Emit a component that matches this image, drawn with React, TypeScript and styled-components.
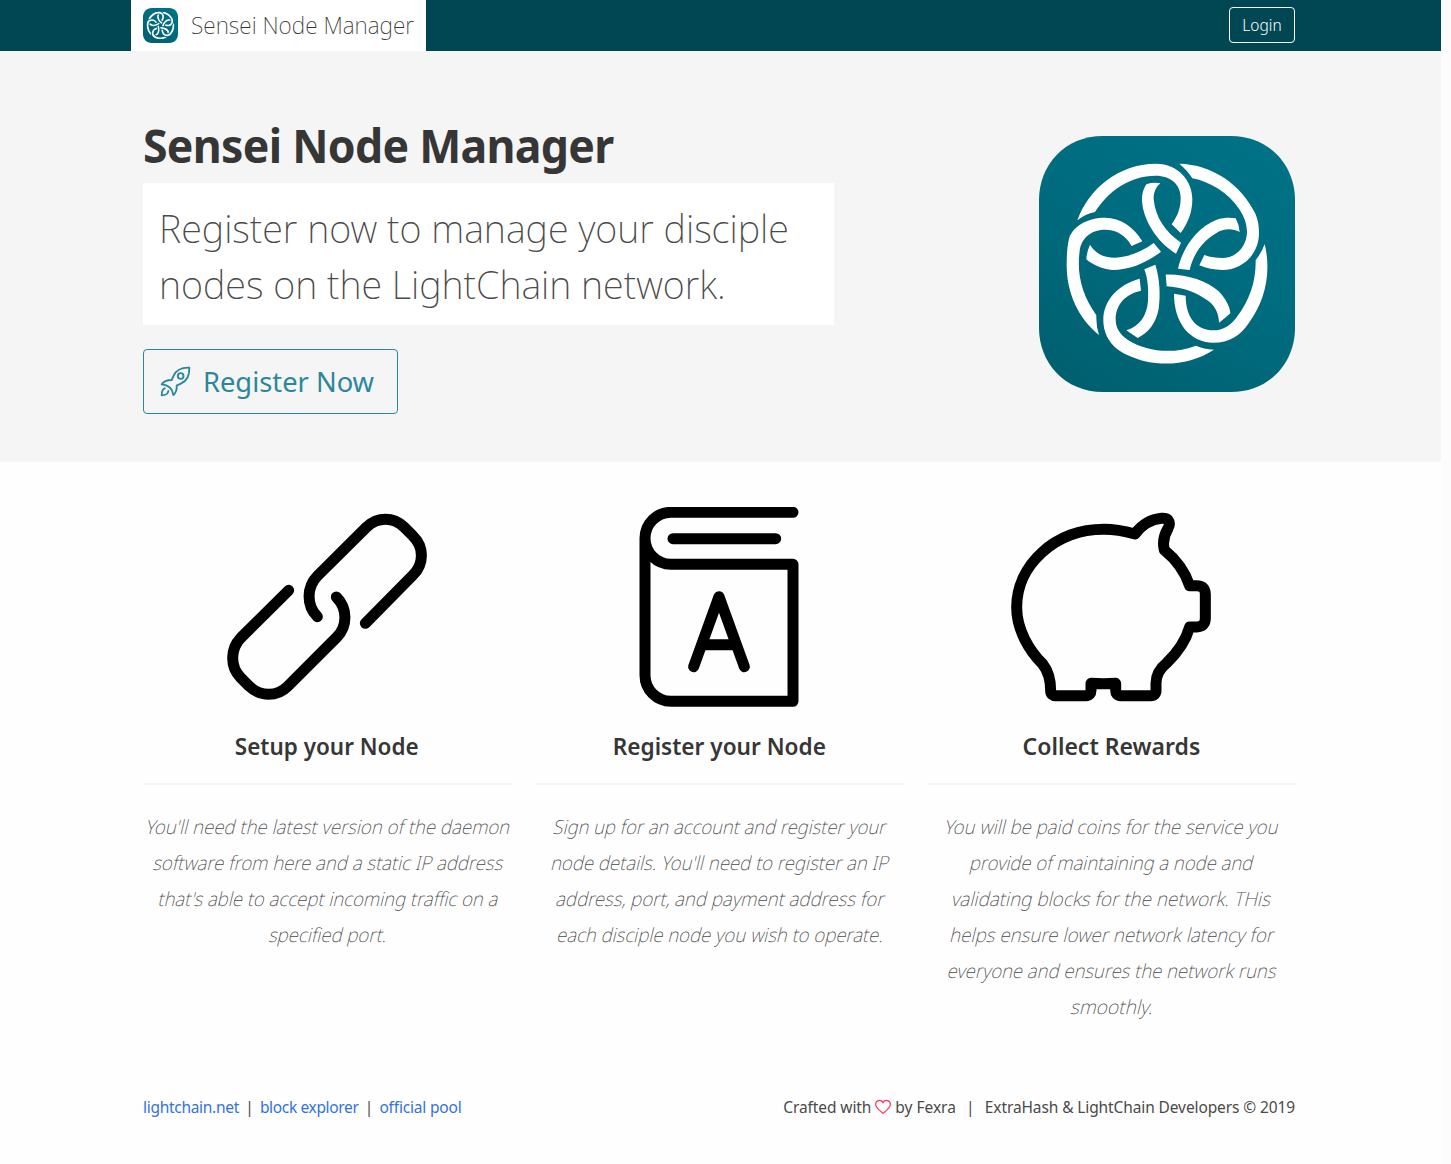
import React from "react";
import styled, { createGlobalStyle } from "styled-components";

const GlobalStyle = createGlobalStyle`
  *, *::before, *::after { box-sizing: border-box; }
  html { background: #fcfcfc; }
  body {
    margin: 0;
    font-family: "Noto Sans", "Open Sans", sans-serif;
    font-size: 16px;
    line-height: 24px;
    color: #4a4a4a;
  }
  h1, h2, h3, p { margin: 0; }
`;

const Page = styled.div`
  width: 1441px;
  height: 1164px;
  overflow: hidden;
  background: #fefefe;
`;

const Container = styled.div`
  width: 1152px;
  margin-left: 143px;
  display: flex;
  justify-content: space-between;
`;

const NavBar = styled.nav`
  height: 51px;
  background: #004753;
`;

const NavRow = styled(Container)`
  height: 51px;
  align-items: center;
`;

const Brand = styled.a`
  display: flex;
  align-items: center;
  gap: 13px;
  width: 295px;
  height: 51px;
  margin-left: -12px;
  padding: 0 12px;
  background: #fff;
`;

const Tracked = styled.span<{ $track: number }>`
  display: block;
  white-space: nowrap;
  letter-spacing: ${(p) => p.$track}px;
`;

/* Narrows a line of text; the origin is the side it is aligned to. */
const Narrow = styled.span<{ $scale: number; $origin?: string; $track?: number }>`
  display: block;
  white-space: nowrap;
  letter-spacing: ${(p) => p.$track ?? 0}px;
  transform: scaleX(${(p) => p.$scale});
  transform-origin: ${(p) => p.$origin ?? "0"} 50%;
`;

const BrandName = styled.span`
  width: 223px;
  margin-bottom: 1px;
  font-size: 23.4px;
  font-weight: 200;
  color: #363636;
`;

const LoginButton = styled.button`
  width: 66px;
  height: 36px;
  margin-bottom: 1px;
  padding: 0;
  border: 1px solid #fff;
  border-radius: 4px;
  background: transparent;
  color: #fff;
  font: 350 15.5px/24px "Noto Sans", sans-serif;
`;

const Hero = styled.section`
  height: 411px;
  background: #f5f5f5;
`;

const HeroCopy = styled.div`
  width: 691px;
  padding-top: 67px;
`;

const HeroTitle = styled.h1`
  height: 65px;
  font-size: 46px;
  line-height: 54px;
  font-weight: 700;
  color: #363636;
`;

const HeroSubtitle = styled.h2`
  height: 142px;
  padding: 17px 16px;
  background: #fff;
  font-size: 38.5px;
  line-height: 56px;
  font-weight: 200;
  color: #4a4a4a;
`;

const RegisterButton = styled.button`
  display: flex;
  align-items: center;
  gap: 12px;
  width: 255px;
  height: 65px;
  margin-top: 24px;
  padding: 0 0 0 16px;
  border: 1px solid #2d879c;
  border-radius: 4px;
  background: transparent;
  color: #2d879c;
  font: 400 27.3px/42px "Noto Sans", sans-serif;
`;

const LogoHolder = styled.div`
  padding-top: 85px;
`;

const LogoSvg = styled.svg`
  display: block;
  flex: none;
`;

const Columns = styled(Container)`
  height: 616px;
  padding-top: 45px;
`;

const Column = styled.article`
  display: flex;
  flex-direction: column;
  align-items: center;
  width: 368px;
`;

const ColumnTitle = styled.h3`
  margin-top: 21px;
  font-size: 23.4px;
  line-height: 36px;
  font-weight: 600;
  color: #363636;
`;

const Rule = styled.div`
  width: 368px;
  height: 2px;
  margin: 19px -1px 24px 1px;
  background: #f4f4f4;
`;

const Description = styled.p`
  display: flex;
  flex-direction: column;
  align-items: center;
  padding-left: 2px;
  font-size: 19.4px;
  line-height: 36px;
  font-weight: 200;
  color: #4a4a4a;
`;

/* The light cut is slanted rather than swapped for its cursive italic. */
const SlantedLine = styled.span<{ $scale: number }>`
  display: block;
  white-space: nowrap;
  transform: scaleX(${(p) => p.$scale * 1.031}) skewX(-14deg);
  transform-origin: 50% 20px;
`;

const Footer = styled(Container)`
  padding-top: 17px;
  font-size: 15.5px;
`;

const FooterGroup = styled.div`
  display: flex;
  align-items: center;
`;

const FooterLink = styled.a`
  color: #3273dc;
`;

const Pipe = styled.span<{ $gap: number }>`
  margin: 0 ${(p) => p.$gap}px;
`;

const HeartIcon = styled.svg`
  margin: 0 4px;
`;

function Logo({ size }: { size: number }) {
  return (
    <LogoSvg width={size} height={size} viewBox="27 30 768 768">
      <defs>
        <linearGradient id="teal" x1="0.8" y1="0" x2="0.2" y2="1">
          <stop offset="0" stopColor="#007186" />
          <stop offset="0.5" stopColor="#006b7e" />
          <stop offset="1" stopColor="#006070" />
        </linearGradient>
      </defs>
      <path fill="url(#teal)" d="M219 30H603C718 30 795 118 795 222V606C795 710 718 798 603 798H219C104 798 27 710 27 606V222C27 118 104 30 219 30Z" />
      <g fill="#fff">
        <path d="M142 283C175 190 265 113 378 113C445 113 487 165 487 220C487 258 474 292 452 321L425 295C444 268 452 245 452 215C452 175 422 149 377 149C300 149 235 195 195 258C175 262 158 270 142 283Z" />
        <path d="M349 175Q370 168 391 172C375 185 370 205 371 220C376 275 408 320 453 350L438 383C390 355 345 295 337 235C334 212 338 192 349 175Z" />
        <path d="M448 113C545 115 635 175 677 265C684 283 687 300 687 322C687 385 637 432 577 432C552 432 530 427 508 418L523 387C542 394 558 396 577 396C620 396 650 360 651 318C650 290 642 272 628 250C595 200 540 167 487 157Q473 134 448 113Z" />
        <path d="M444 428C458 365 500 305 560 281C580 275 600 274 617 277Q628 297 629 318C610 308 588 307 568 316C520 342 490 382 479 432Z" />
        <path d="M207 627C145 578 110 500 110 418C110 385 112 360 117 338C130 298 175 275 225 275C272 275 312 303 337 346L305 360C287 328 260 311 225 311C180 311 153 340 149 375C140 445 155 505 199 568Q198 600 207 627Z" />
        <path d="M180 356C197 383 220 395 255 395C298 393 338 376 371 351L393 377C350 410 300 432 247 432C218 430 190 418 169 400Q170 377 180 356Z" />
        <path d="M343 430L376 416C389 458 392 505 386 548C379 590 355 620 323 636L289 613C330 600 350 570 354 525C356 492 354 460 343 430Z" />
        <path d="M329 458C262 476 220 525 220 582C220 630 248 668 290 686C370 724 470 724 552 671Q520 669 498 659C430 685 350 678 294 642C268 625 257 605 257 580C257 535 288 503 333 494Z" />
        <path d="M407 446C470 444 530 465 565 495C590 520 600 545 601 562Q585 577 567 590C566 560 555 535 525 518C490 495 450 483 410 481Z" />
        <path d="M432 503L467 509C467 575 500 613 550 613C580 613 603 597 621 572C660 520 678 465 677 402Q695 380 704 354C725 440 705 525 657 590C632 628 598 650 550 650C478 648 432 590 432 503Z" />
      </g>
    </LogoSvg>
  );
}

function RocketIcon() {
  return (
    <svg width="31" height="31" viewBox="90 93 93 93" fill="none" stroke="currentColor" strokeWidth="5.6" strokeLinejoin="round" strokeLinecap="round">
      <path d="M178 98C152 97 138 107 131 122L125 135C110 135 101 139 95 148C116 150 128 162 130 180C137 174 141 163 140 152L154 145C170 137 179 122 178 98Z" />
      <circle cx="152" cy="123" r="8.5" />
      <path d="M104 160C97 163 95 170 95 181C107 181 114 177 115 168" />
    </svg>
  );
}

const FeatureSvg = styled.svg`
  display: block;
  flex: none;
  fill: none;
  stroke: #000;
  stroke-width: 33px;
  stroke-linecap: round;
  stroke-linejoin: round;
`;

const LinkIcon = () => (
  <FeatureSvg width="200" height="200" viewBox="36 21 600 600">
    <path d="M307 350C274 317 274 262 307 228L455 81C488 50 535 50 567 81L593 107C628 140 628 192 593 226L451 370" />
    <path d="M221 271L77 414C45 448 45 500 77 533L103 559C137 591 186 591 218 559L366 411C398 378 398 325 364 291" />
  </FeatureSvg>
);

const BookIcon = () => (
  <FeatureSvg width="200" height="200" viewBox="-33 21 600 600">
    <path d="M489 37H123A78 78 0 0 0 123 193H489V604H123A78 78 0 0 1 45 526V115" />
    <path d="M129 116H437M191 500L267 290L343 500M222 434H311" />
  </FeatureSvg>
);

const PiggyIcon = () => (
  <FeatureSvg width="200" height="200" viewBox="33 21 600 600">
    <path d="M405 102C375 94 345 88 312 88C165 88 50 195 50 322C50 390 88 452 128 492C146 515 152 540 152 572Q152 587 168 587H258Q273 587 273 571V550Q310 553 347 550V571Q347 587 362 587H452Q468 587 468 571V550C468 525 480 505 500 489C530 460 558 420 569 381H590Q616 380 616 355V283Q616 257 590 257H569C555 215 530 180 493 150C488 130 492 105 504 85Q512 70 504 60Q498 54 485 55C450 58 425 75 405 102Z" />
  </FeatureSvg>
);

type Line = [text: string, scale: number];

const features: { icon: React.ReactNode; title: Line; lines: Line[] }[] = [
  {
    icon: <LinkIcon />,
    title: ["Setup your Node", 0.96],
    lines: [
      ["You'll need the latest version of the daemon", 0.938],
      ["software from here and a static IP address", 0.936],
      ["that's able to accept incoming traffic on a", 0.934],
      ["specified port.", 0.936],
    ],
  },
  {
    icon: <BookIcon />,
    title: ["Register your Node", 0.966],
    lines: [
      ["Sign up for an account and register your", 0.928],
      ["node details. You'll need to register an IP", 0.936],
      ["address, port, and payment address for", 0.94],
      ["each disciple node you wish to operate.", 0.934],
    ],
  },
  {
    icon: <PiggyIcon />,
    title: ["Collect Rewards", 0.983],
    lines: [
      ["You will be paid coins for the service you", 0.936],
      ["provide of maintaining a node and", 0.931],
      ["validating blocks for the network. THis", 0.952],
      ["helps ensure lower network latency for", 0.945],
      ["everyone and ensures the network runs", 0.932],
      ["smoothly.", 0.97],
    ],
  },
];

export default function App() {
  return (
    <Page>
      <GlobalStyle />
      <NavBar>
        <NavRow>
          <Brand>
            <Logo size={35} />
            <BrandName><Narrow $scale={0.969}>Sensei Node Manager</Narrow></BrandName>
          </Brand>
          <LoginButton>Login</LoginButton>
        </NavRow>
      </NavBar>
      <Hero>
        <Container>
          <HeroCopy>
            <HeroTitle><Narrow $scale={0.97} $track={-0.74}>Sensei Node Manager</Narrow></HeroTitle>
            <HeroSubtitle>
              <Narrow $scale={0.983}>Register now to manage your disciple</Narrow>
              <Narrow $scale={0.982}>nodes on the LightChain network.</Narrow>
            </HeroSubtitle>
            <RegisterButton>
              <RocketIcon />
              <Tracked $track={0}>Register Now</Tracked>
            </RegisterButton>
          </HeroCopy>
          <LogoHolder><Logo size={256} /></LogoHolder>
        </Container>
      </Hero>
      <Columns>
        {features.map(({ icon, title, lines }) => (
          <Column key={title[0]}>
            {icon}
            <ColumnTitle><Narrow $scale={title[1]} $origin="50%">{title[0]}</Narrow></ColumnTitle>
            <Rule />
            <Description>
              {lines.map(([text, scale]) => <SlantedLine key={text} $scale={scale}>{text}</SlantedLine>)}
            </Description>
          </Column>
        ))}
      </Columns>
      <Footer as="footer">
        <FooterGroup>
          <FooterLink><Tracked $track={-0.29}>lightchain.net</Tracked></FooterLink>
          <Pipe $gap={6.2}>|</Pipe>
          <FooterLink><Tracked $track={-0.35}>block explorer</Tracked></FooterLink>
          <Pipe $gap={6.2}>|</Pipe>
          <FooterLink><Tracked $track={-0.18}>official pool</Tracked></FooterLink>
        </FooterGroup>
        <FooterGroup>
          <Tracked $track={-0.1}>Crafted with</Tracked>
          <HeartIcon width="16" height="16" viewBox="0 0 16 16" fill="none" stroke="#ff3860" strokeWidth="1.2">
            <path d="M8 14.4C6 12.6 .6 9 .6 5.2C.6 1 6.2 .2 8 3.6C9.800 .2 15.400 1 15.400 5.200C15.400 9 10 12.600 8 14.400Z" />
          </HeartIcon>
          <Tracked $track={0}>by Fexra</Tracked>
          <Pipe $gap={10.2}>|</Pipe>
          <Tracked $track={-0.11}>ExtraHash &amp; LightChain Developers © 2019</Tracked>
        </FooterGroup>
      </Footer>
    </Page>
  );
}
